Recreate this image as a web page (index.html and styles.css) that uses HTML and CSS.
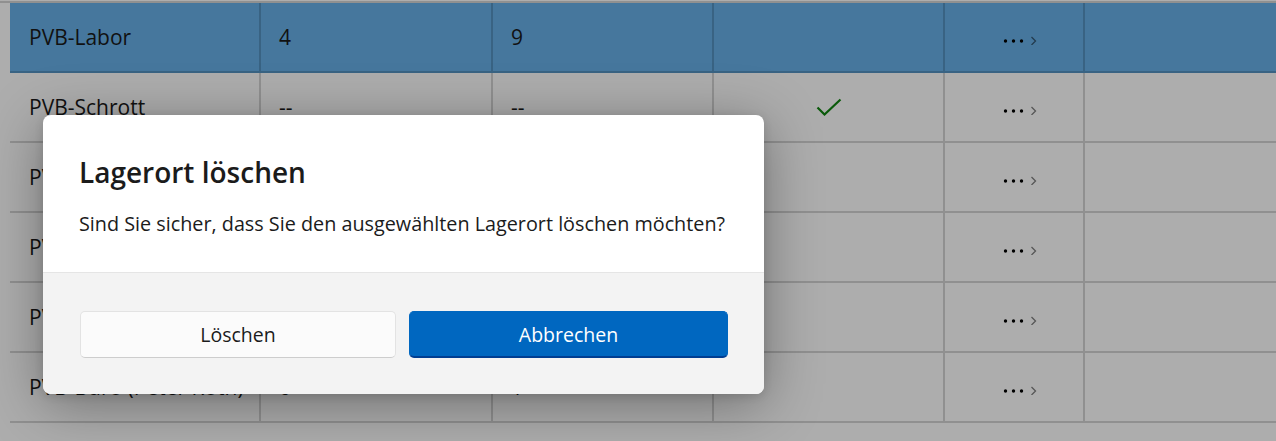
FILE: index.html
```html
<!DOCTYPE html>
<html lang="de">
<head>
<meta charset="utf-8">
<title>Lagerorte</title>
<link rel="stylesheet" href="styles.css">
</head>
<body>
<div class="grid">
  <div class="row selected">
    <div class="cell name">PVB-Labor</div>
    <div class="cell">4</div>
    <div class="cell">9</div>
    <div class="cell center"></div>
    <div class="cell center more"><svg class="more-icon" width="34" height="12" viewBox="0 0 34 12"><circle cx="2.5" cy="8" r="1.7"/><circle cx="10.5" cy="8" r="1.7"/><circle cx="18.5" cy="8" r="1.7"/><path class="chev" d="M28.5 4 L32.5 8 L28.5 12"/></svg></div>
    <div class="cell last"></div>
  </div>
  <div class="row">
    <div class="cell name">PVB-Schrott</div>
    <div class="cell">--</div>
    <div class="cell">--</div>
    <div class="cell center"><svg class="check" width="26" height="18" viewBox="0 0 26 18"><path d="M1.5 9.5 L8.5 16.5 L24.5 1.5"/></svg></div>
    <div class="cell center more"><svg class="more-icon" width="34" height="12" viewBox="0 0 34 12"><circle cx="2.5" cy="8" r="1.7"/><circle cx="10.5" cy="8" r="1.7"/><circle cx="18.5" cy="8" r="1.7"/><path class="chev" d="M28.5 4 L32.5 8 L28.5 12"/></svg></div>
    <div class="cell last"></div>
  </div>
  <div class="row">
    <div class="cell name">PVB-Lager</div>
    <div class="cell"></div>
    <div class="cell"></div>
    <div class="cell center"></div>
    <div class="cell center more"><svg class="more-icon" width="34" height="12" viewBox="0 0 34 12"><circle cx="2.5" cy="8" r="1.7"/><circle cx="10.5" cy="8" r="1.7"/><circle cx="18.5" cy="8" r="1.7"/><path class="chev" d="M28.5 4 L32.5 8 L28.5 12"/></svg></div>
    <div class="cell last"></div>
  </div>
  <div class="row">
    <div class="cell name">PVB-Versand</div>
    <div class="cell"></div>
    <div class="cell"></div>
    <div class="cell center"></div>
    <div class="cell center more"><svg class="more-icon" width="34" height="12" viewBox="0 0 34 12"><circle cx="2.5" cy="8" r="1.7"/><circle cx="10.5" cy="8" r="1.7"/><circle cx="18.5" cy="8" r="1.7"/><path class="chev" d="M28.5 4 L32.5 8 L28.5 12"/></svg></div>
    <div class="cell last"></div>
  </div>
  <div class="row">
    <div class="cell name">PVB-Werkstatt</div>
    <div class="cell"></div>
    <div class="cell"></div>
    <div class="cell center"></div>
    <div class="cell center more"><svg class="more-icon" width="34" height="12" viewBox="0 0 34 12"><circle cx="2.5" cy="8" r="1.7"/><circle cx="10.5" cy="8" r="1.7"/><circle cx="18.5" cy="8" r="1.7"/><path class="chev" d="M28.5 4 L32.5 8 L28.5 12"/></svg></div>
    <div class="cell last"></div>
  </div>
  <div class="row">
    <div class="cell name">PVB-Büro (Peter Roth)</div>
    <div class="cell">0</div>
    <div class="cell">1</div>
    <div class="cell center"></div>
    <div class="cell center more"><svg class="more-icon" width="34" height="12" viewBox="0 0 34 12"><circle cx="2.5" cy="8" r="1.7"/><circle cx="10.5" cy="8" r="1.7"/><circle cx="18.5" cy="8" r="1.7"/><path class="chev" d="M28.5 4 L32.5 8 L28.5 12"/></svg></div>
    <div class="cell last"></div>
  </div>
</div>

<div class="smoke"></div>

<div class="dialog" role="dialog" aria-labelledby="dlg-title">
  <div class="dialog-body">
    <h1 class="dialog-title" id="dlg-title">Lagerort löschen</h1>
    <p class="dialog-text">Sind Sie sicher, dass Sie den ausgewählten Lagerort löschen möchten?</p>
  </div>
  <div class="dialog-footer">
    <button class="btn btn-secondary" type="button">Löschen</button>
    <button class="btn btn-primary" type="button">Abbrechen</button>
  </div>
</div>
</body>
</html>
```

FILE: styles.css
```css
* {
  box-sizing: border-box;
}

html, body {
  margin: 0;
  padding: 0;
}

body {
  width: 1276px;
  height: 441px;
  overflow: hidden;
  background: #ffffff;
  font-family: "Open Sans", "Noto Sans", "Liberation Sans", sans-serif;
  color: #1a1a1a;
  position: relative;
}

/* ---------- table behind the dialog ---------- */
.grid {
  margin-top: 1px;
  border-top: 2px solid rgba(0, 0, 0, 0.17);
}

.row {
  margin-left: 10px;
  height: 70px;
  display: grid;
  grid-template-columns: 251px 232px 221px 231px 140px 1fr;
  border-bottom: 2px solid rgba(0, 0, 0, 0.17);
}

.row.selected {
  background: #67b0e8;
}

.cell {
  display: flex;
  align-items: center;
  padding-left: 18px;
  border-right: 2px solid rgba(0, 0, 0, 0.17);
  font-size: 21px;
  white-space: nowrap;
  overflow: hidden;
}

.cell.name {
  padding-left: 19px;
}

.cell.center {
  justify-content: center;
  padding-left: 0;
}

.cell.more {
  padding-left: 12px;
}

.cell.last {
  border-right: none;
}

.more-icon circle {
  fill: #000000;
}

.more-icon .chev {
  fill: none;
  stroke: rgba(0, 0, 0, 0.5);
  stroke-width: 1.3;
}

.more-icon {
  margin-top: 4px;
}

.check path {
  fill: none;
  stroke: #0f850f;
  stroke-width: 2.2;
}

/* ---------- smoke layer ---------- */
.smoke {
  position: absolute;
  inset: 0;
  background: rgba(0, 0, 0, 0.32);
}

/* ---------- dialog ---------- */
.dialog {
  position: absolute;
  left: 43px;
  top: 115px;
  width: 721px;
  height: 279px;
  background: #ffffff;
  border-radius: 8px;
  overflow: hidden;
  box-shadow: 0 10px 56px rgba(0, 0, 0, 0.36), 0 2px 10px rgba(0, 0, 0, 0.12);
  display: flex;
  flex-direction: column;
}

.dialog-body {
  padding: 39px 36px 34px 36px;
  height: 157px;
}

.dialog-title {
  margin: 0 0 20px 0;
  font-size: 28px;
  line-height: 36px;
  font-weight: 600;
  color: #1b1b1b;
}

.dialog-text {
  margin: 0;
  font-size: 19.8px;
  line-height: 28px;
  color: #1b1b1b;
  white-space: nowrap;
}

.dialog-footer {
  flex: 1;
  background: #f3f3f3;
  border-top: 1px solid #e5e5e5;
  padding: 38px 36px 35px 37px;
  display: grid;
  grid-template-columns: 316px 319px;
  column-gap: 13px;
}

.btn {
  height: 47px;
  border-radius: 5px;
  font-family: "Open Sans", "Noto Sans", "Liberation Sans", sans-serif;
  font-size: 19.5px;
  padding: 0;
  cursor: pointer;
}

.btn-secondary {
  background: #fbfbfb;
  color: #1b1b1b;
  border: 1px solid #e3e3e3;
  border-bottom-color: #cdcdcd;
}

.btn-primary {
  background: #0067c0;
  color: #ffffff;
  border: 1px solid #0067c0;
  border-bottom: 2px solid #003e92;
}
```
